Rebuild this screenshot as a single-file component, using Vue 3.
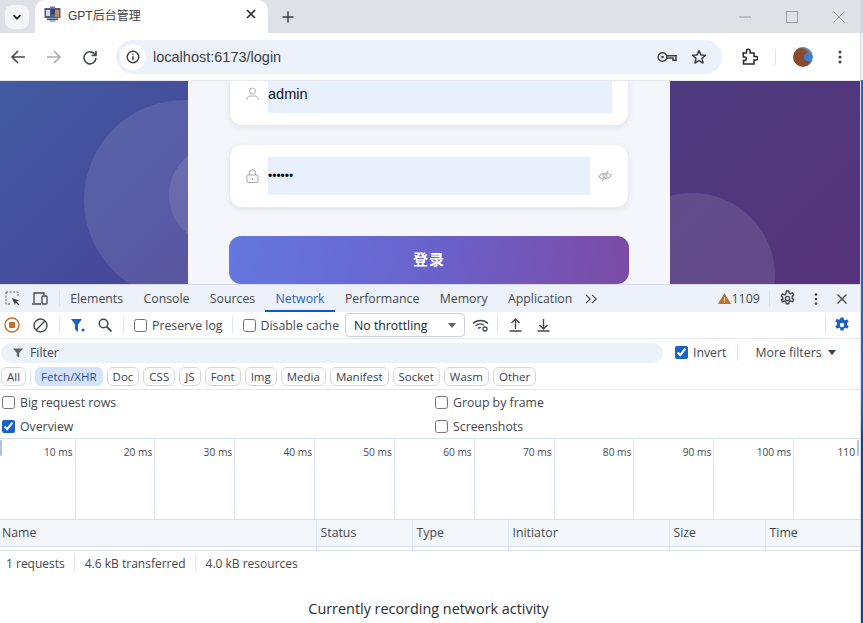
<template>
  <div class="screen">
    <div class="window">
      <div class="tabstrip">
        <button class="tab-search">
          <svg width="12" height="12" viewBox="0 0 12 12"><path d="M2.5 4.2 6 7.7l3.500-3.500" fill="none" stroke="#2a2c30" stroke-width="1.900"/></svg>
        </button>
        <div class="tab">
          <svg class="favicon" width="17" height="16" viewBox="0 0 17 16">
            <rect x="0.500" y="2" width="16" height="10" fill="#4a5f88"/>
            <rect x="2" y="4" width="4" height="6" fill="#d9d8da"/>
            <rect x="7" y="3" width="4" height="5" fill="#2f3f66"/>
            <rect x="11" y="4" width="4" height="7" fill="#c08a62"/>
            <rect x="6" y="0.500" width="5" height="2" fill="#6f78a6"/>
            <path d="M3 12.500h11V14H3z" fill="#2f4a7d"/>
            <path d="M5.500 14.500h6v1h-6z" fill="#5b6fa0"/>
          </svg>
          <span class="tab-title">GPT后台管理</span>
          <svg class="tab-close" width="10" height="10" viewBox="0 0 10 10"><path d="m1 1 8 8M9 1 1 9" stroke="#2a2c30" stroke-width="1.700"/></svg>
        </div>
        <svg class="new-tab" width="12" height="12" viewBox="0 0 12 12"><path d="M6 .5v11M.5 6h11" stroke="#3c4043" stroke-width="1.500"/></svg>
        <div class="win-controls">
          <svg width="12" height="12" viewBox="0 0 12 12"><path d="M0 6h12" stroke="#9a9da1"/></svg>
          <svg width="12" height="12" viewBox="0 0 12 12"><rect x=".5" y=".5" width="11" height="11" fill="none" stroke="#9a9da1"/></svg>
          <svg width="12" height="12" viewBox="0 0 12 12"><path d="m.5.5 11 11M11.500.5l-11 11" stroke="#9a9da1"/></svg>
        </div>
      </div>

      <div class="toolbar">
        <svg class="nav" width="16" height="16" viewBox="0 0 16 16"><path d="M15 8H2M8 2 2 8l6 6" fill="none" stroke="#45484c" stroke-width="1.600"/></svg>
        <svg class="nav" width="16" height="16" viewBox="0 0 16 16"><path d="M1 8h13M8 2l6 6-6 6" fill="none" stroke="#a9acb0" stroke-width="1.600"/></svg>
        <svg class="nav" width="16" height="16" viewBox="0 0 16 16"><path d="M13.300 6A6 6 0 1 0 14 9M14 2v4.500H9.500" fill="none" stroke="#45484c" stroke-width="1.600"/></svg>
        <div class="omnibox">
          <span class="site-info">
            <svg width="14" height="14" viewBox="0 0 14 14"><circle cx="7" cy="7" r="5.800" fill="none" stroke="#3c4043" stroke-width="1.400"/><path d="M7 6.200v4M7 3.700v1.300" stroke="#3c4043" stroke-width="1.500"/></svg>
          </span>
          <span class="url">localhost:6173/login</span>
          <svg class="key" width="20" height="12" viewBox="0 0 20 12"><circle cx="5.500" cy="6" r="4.300" fill="none" stroke="#3c4043" stroke-width="1.500"/><circle cx="5.500" cy="6" r="1.300" fill="#3c4043"/><path d="M10 4.800h9v4.500h-3V7h-6" fill="none" stroke="#3c4043" stroke-width="1.500"/></svg>
          <svg class="star" width="16" height="16" viewBox="0 0 16 16"><path d="m8 1.600 1.900 4.300 4.600.4-3.500 3.100 1 4.600L8 11.600 4 14l1-4.600-3.500-3.100 4.600-.4z" fill="none" stroke="#3c4043" stroke-width="1.500" stroke-linejoin="round"/></svg>
        </div>
        <svg class="ext" width="17" height="17" viewBox="0 0 17 17"><path d="M2 5h3.500V3a1.800 1.800 0 0 1 3.600 0v2H13v3.500h2a1.800 1.800 0 0 1 0 3.600h-2V16H2.500v-3.500h1a1.800 1.800 0 0 0 0-3.600h-1z" fill="none" stroke="#26282b" stroke-width="1.500"/></svg>
        <span class="sep"></span>
        <span class="avatar"></span>
        <svg class="menu" width="4" height="14" viewBox="0 0 4 14"><circle cx="2" cy="2" r="1.500" fill="#3c4043"/><circle cx="2" cy="7" r="1.500" fill="#3c4043"/><circle cx="2" cy="12" r="1.500" fill="#3c4043"/></svg>
      </div>

      <div class="page">
        <span class="blob blob-a"></span>
        <span class="blob blob-b"></span>
        <span class="blob blob-c"></span>
        <div class="login-panel">
          <div class="field">
            <svg class="field-icon" width="13" height="14" viewBox="0 0 13 14"><circle cx="6.500" cy="4" r="3" fill="none" stroke="#aeb1b6"/><path d="M1 13v-1c0-2 1.500-3 3-3h5c1.500 0 3 1 3 3v1" fill="none" stroke="#aeb1b6"/></svg>
            <input class="field-input user" value="admin" />
          </div>
          <div class="field">
            <svg class="field-icon" width="13" height="14" viewBox="0 0 13 14"><rect x="1" y="6" width="11" height="7.500" rx="1" fill="none" stroke="#a4a7ac"/><path d="M3.500 6V3.800a3 3 0 0 1 6 0V6M6.500 9v2" fill="none" stroke="#a4a7ac"/></svg>
            <input class="field-input pass" type="password" value="123456" />
            <svg class="eye" width="14" height="12" viewBox="0 0 14 12"><path d="M.8 6C3 2.500 11 2.500 13.200 6 11 9.500 3 9.500.8 6z" fill="none" stroke="#b5b7ba" stroke-width="1.200"/><circle cx="7" cy="6" r="2" fill="none" stroke="#b5b7ba"/><path d="m3 11 8-10" stroke="#b5b7ba"/></svg>
          </div>
          <button class="login-btn">登录</button>
        </div>
      </div>

      <div class="devtools">
        <div class="dt-tabs">
          <svg class="dt-ic" width="16" height="16" viewBox="0 0 16 16"><path d="M1 1h12v4M1 1v12h4" fill="none" stroke="#5f6368" stroke-dasharray="2 1.500"/><path d="m7 7 7 2.500-3 1.200-1 3.300z" fill="#3c4043"/><path d="m10 10 4 4" stroke="#3c4043" stroke-width="1.300"/></svg>
          <svg class="dt-ic" width="17" height="15" viewBox="0 0 17 15"><path d="M1 13h9M3 12V2h10v2" fill="none" stroke="#45484c" stroke-width="1.300"/><rect x="11" y="5" width="5" height="8" rx="1" fill="none" stroke="#45484c" stroke-width="1.300"/></svg>
          <span class="dt-sep"></span>
          <span v-for="t in panels" :key="t" class="panel-tab" :class="{ active: t === 'Network' }">{{ t }}</span>
          <svg class="more-tabs" width="13" height="10" viewBox="0 0 13 10"><path d="m1 .8 4.200 4.200L1 9.200M7 .8 11.200 5 7 9.200" fill="none" stroke="#45484c" stroke-width="1.200"/></svg>
          <span class="spacer"></span>
          <svg width="13" height="11" viewBox="0 0 13 11"><path d="M6.500 0 13 11H0z" fill="#c5702a"/><path d="M6.500 4v3.500M6.500 8.500v1" stroke="#fff"/></svg>
          <span class="warn-count">1109</span>
          <span class="dt-sep wide"></span>
          <svg class="gear" width="17" height="17" viewBox="0 0 16 16"><path d="M6.800 1h2.400l.4 2 1.300.6 1.800-1 1.200 2-1.500 1.400v1.900l1.500 1.300-1.200 2.100-1.800-1-1.300.7-.4 2H6.800l-.4-2-1.300-.7-1.800 1-1.200-2.100L3.600 8.900V7L2.100 5.600l1.200-2 1.800 1 1.300-.6z" fill="none" stroke="#45484c" stroke-width="1.300" stroke-linejoin="round"/><circle cx="8" cy="8" r="2" fill="none" stroke="#45484c" stroke-width="1.300"/></svg>
          <svg class="kebab" width="4" height="12" viewBox="0 0 4 12"><circle cx="2" cy="1.500" r="1.300" fill="#45484c"/><circle cx="2" cy="6" r="1.300" fill="#45484c"/><circle cx="2" cy="10.500" r="1.300" fill="#45484c"/></svg>
          <svg class="dt-close" width="10" height="10" viewBox="0 0 10 10"><path d="m.5.5 9 9M9.500.5l-9 9" stroke="#45484c" stroke-width="1.400"/></svg>
        </div>

        <div class="net-toolbar">
          <svg width="16" height="16" viewBox="0 0 16 16"><circle cx="8" cy="8" r="7" fill="none" stroke="#c5702a" stroke-width="1.400"/><rect x="5" y="5" width="6" height="6" rx="1" fill="#c5702a"/></svg>
          <svg class="clear" width="15" height="15" viewBox="0 0 15 15"><circle cx="7.500" cy="7.500" r="6.500" fill="none" stroke="#45484c" stroke-width="1.400"/><path d="m3 12 9-9" stroke="#45484c" stroke-width="1.400"/></svg>
          <span class="dt-sep"></span>
          <svg class="funnel" width="14" height="13" viewBox="0 0 14 13"><path d="M0 0h11L7 5.500V13L4 10.500v-5z" fill="#1a62c8"/><circle cx="12" cy="11" r="1.600" fill="#1a62c8"/></svg>
          <svg class="search" width="14" height="14" viewBox="0 0 14 14"><circle cx="5.500" cy="5.500" r="4.300" fill="none" stroke="#45484c" stroke-width="1.500"/><path d="m8.500 8.500 5 5" stroke="#45484c" stroke-width="1.800"/></svg>
          <span class="dt-sep after-search"></span>
          <label class="check"><input type="checkbox" />Preserve log</label>
          <span class="dt-sep"></span>
          <label class="check"><input type="checkbox" />Disable cache</label>
          <div class="throttle"><span>No throttling</span><svg width="8" height="5" viewBox="0 0 8 5"><path d="M0 0h8L4 5z" fill="#5f6368"/></svg></div>
          <svg class="wifi" width="17" height="13" viewBox="0 0 17 13"><path d="M1 4.500C5 .5 12 .5 16 4.500M3.500 7c2.500-2.300 6-2.500 8.500-.8M6 9.500c.8-.8 1.800-1.100 2.800-1" fill="none" stroke="#45484c" stroke-width="1.300"/><circle cx="13" cy="10" r="2" fill="none" stroke="#45484c" stroke-width="1.300"/></svg>
          <span class="dt-sep after-wifi"></span>
          <svg class="updown" width="13" height="14" viewBox="0 0 13 14"><path d="M6.500 11V1.500M2.500 5l4-4 4 4M.5 13h12" fill="none" stroke="#45484c" stroke-width="1.400"/></svg>
          <svg class="updown" width="13" height="14" viewBox="0 0 13 14"><path d="M6.500 1v9.500M2.500 7l4 4 4-4M.5 13h12" fill="none" stroke="#45484c" stroke-width="1.400"/></svg>
          <span class="spacer"></span>
          <span class="dt-sep before-gear"></span>
          <svg width="16" height="16" viewBox="0 0 16 16"><path fill-rule="evenodd" d="M6.500.5h3l.4 2 1.400.7 1.900-.9 1.500 2.500-1.600 1.300v1.800l1.600 1.300-1.500 2.500-1.900-.9-1.400.8-.4 2h-3l-.4-2-1.400-.8-1.900.9-1.500-2.500 1.600-1.300V5.600L1.300 4.300l1.500-2.500 1.900.9 1.400-.7zM8 5.800a2.200 2.200 0 1 0 0 4.400 2.200 2.200 0 0 0 0-4.400z" fill="#1a62c8"/></svg>
        </div>

        <div class="filter-row">
          <div class="filter-box">
            <svg width="10" height="10" viewBox="0 0 10 10"><path d="M0 .5h10L6.200 5v4.500L3.800 8V5z" fill="#5f6368"/></svg>
            <span>Filter</span>
          </div>
          <label class="check invert"><input type="checkbox" checked />Invert</label>
          <span class="dt-sep"></span>
          <span class="more-filters">More filters<svg width="8" height="5" viewBox="0 0 8 5"><path d="M0 0h8L4 5z" fill="#3c4043"/></svg></span>
        </div>

        <div class="chips">
          <template v-for="c in chips" :key="c">
            <span class="chip" :class="{ on: c === 'Fetch/XHR' }">{{ c }}</span>
            <span v-if="c === 'All'" class="chip-sep"></span>
          </template>
        </div>

        <div class="options">
          <label class="check"><input type="checkbox" />Big request rows</label>
          <label class="check"><input type="checkbox" />Group by frame</label>
          <label class="check"><input type="checkbox" checked />Overview</label>
          <label class="check"><input type="checkbox" />Screenshots</label>
        </div>

        <div class="overview">
          <div v-for="ms in ticks" :key="ms" class="tick">{{ ms }}</div>
          <span class="handle left"></span>
          <span class="handle right"></span>
        </div>

        <div class="net-head">
          <span v-for="c in columns" :key="c">{{ c }}</span>
        </div>
        <div class="net-gap">
          <span v-for="c in columns" :key="c"></span>
        </div>

        <div class="status-bar">
          <span>1 requests</span>
          <span>4.6 kB transferred</span>
          <span>4.0 kB resources</span>
        </div>

        <div class="recording">Currently recording network activity</div>
      </div>
    </div>
    <div class="desktop-edge"></div>
  </div>
</template>

<script setup>
const panels = ['Elements', 'Console', 'Sources', 'Network', 'Performance', 'Memory', 'Application']
const chips = ['All', 'Fetch/XHR', 'Doc', 'CSS', 'JS', 'Font', 'Img', 'Media', 'Manifest', 'Socket', 'Wasm', 'Other']
const ticks = ['10 ms', '20 ms', '30 ms', '40 ms', '50 ms', '60 ms', '70 ms', '80 ms', '90 ms', '100 ms', '110']
const columns = ['Name', 'Status', 'Type', 'Initiator', 'Size', 'Time']
</script>

<style>
html, body {
  margin: 0;
  overflow: hidden;
  background: #fff;
}
</style>

<style scoped>
.screen {
  display: flex;
  width: 863px;
  height: 623px;
  overflow: hidden;
  font-family: "Open Sans", "Noto Sans CJK SC", sans-serif;
  color: #45484c;
}
.window {
  width: 860px;
  display: flex;
  flex-direction: column;
}
.desktop-edge {
  flex: 1;
  border-left: 1px solid #d8dae0;
  background: linear-gradient(#d4d6da 0, #d4d6da 33px, #f2f3f5 33px, #f2f3f5 80px, #2a62c0 80px, #2a62c0 400px, #1d3f85 440px, #1d3f85 100%);
}

/* browser chrome */
.tabstrip {
  height: 33px;
  background: #dee1e6;
  display: flex;
  align-items: center;
}
.tab-search {
  width: 24px;
  height: 24px;
  margin-left: 5px;
  border: none;
  border-radius: 8px;
  background: #f4f5f7;
  display: flex;
  align-items: center;
  justify-content: center;
  padding: 0;
}
.tab {
  width: 233px;
  height: 33px;
  margin-left: 6px;
  background: #fff;
  border-radius: 10px 10px 0 0;
  display: flex;
  align-items: center;
  box-sizing: border-box;
  padding: 0 12px 5px 9px;
}
.favicon {
  flex: none;
}
.tab-title {
  margin-left: 7px;
  font-family: "Liberation Sans", "Noto Sans CJK SC", sans-serif;
  font-size: 12px;
  color: #3c4043;
  flex: 1;
}
.new-tab {
  margin-left: 14px;
}
.win-controls {
  margin-left: auto;
  display: flex;
  align-items: center;
  gap: 35px;
  padding-right: 15px;
}
.toolbar {
  height: 48px;
  background: #fff;
  display: flex;
  align-items: center;
  box-sizing: border-box;
  padding-left: 10px;
  border-bottom: 1px solid #e6e8ec;
}
.nav {
  margin-right: 20px;
}
.nav:nth-child(3) {
  margin-right: 18px;
}
.omnibox {
  width: 606px;
  height: 34px;
  background: #edf2fa;
  border-radius: 17px;
  display: flex;
  align-items: center;
  box-sizing: border-box;
  padding-left: 4px;
  padding-right: 15px;
}
.site-info {
  width: 26px;
  height: 26px;
  border-radius: 50%;
  background: #fff;
  display: flex;
  align-items: center;
  justify-content: center;
}
.url {
  margin-left: 7px;
  font-family: "Liberation Sans", sans-serif;
  font-size: 14.5px;
  color: #3c4043;
  flex: 1;
}
.star {
  margin-left: 14px;
}
.ext {
  margin-left: 19px;
}
.sep {
  width: 1px;
  height: 16px;
  background: #dfe1e5;
  margin-left: 17px;
}
.avatar {
  width: 20px;
  height: 20px;
  border-radius: 50%;
  margin-left: 17px;
  background: radial-gradient(circle at 75% 50%, #3c7fd0 0 22%, transparent 24%), radial-gradient(circle at 30% 60%, #8a4a2e 0 55%, #5d8fc4 70%);
}
.menu {
  margin-left: 25px;
}

/* login page, scrolled down a little */
.page {
  position: relative;
  height: 203px;
  overflow: hidden;
  background: linear-gradient(135deg, #425ba0 0%, #47479a 30%, #4d3c7f 62%, #56327a 100%);
}
.blob {
  position: absolute;
  border-radius: 50%;
  background: rgba(255, 255, 255, 0.1);
}
.blob-a {
  width: 200px;
  height: 200px;
  left: 84px;
  top: 19px;
}
.blob-b {
  width: 100px;
  height: 100px;
  left: 169px;
  top: 64px;
}
.blob-c {
  width: 166px;
  height: 166px;
  left: 609px;
  top: 112px;
}
.login-panel {
  position: relative;
  width: 482px;
  height: 203px;
  margin-left: 188px;
  background: #f5f6fb;
  box-sizing: border-box;
  padding: 0 41px;
  display: flex;
  flex-direction: column;
}
.field {
  flex: none;
  height: 62px;
  width: 398px;
  margin-left: 1px;
  box-sizing: border-box;
  background: #fff;
  border-radius: 12px;
  box-shadow: 0 2px 6px rgba(30, 40, 90, 0.1);
  display: flex;
  align-items: center;
  padding: 0 16px;
  margin-bottom: 20px;
}
.field:first-child {
  margin-top: -18px;
}
.field-icon {
  flex: none;
  margin-right: 9px;
}
.field-input {
  border: none;
  outline: none;
  background: #e8f0fe;
  height: 38px;
  padding: 0;
  font-family: "Liberation Sans", sans-serif;
  font-size: 14.5px;
  color: #111;
}
.field-input.user {
  width: 344px;
}
.field-input.pass {
  width: 322px;
  font-size: 12px;
}
.eye {
  margin-left: 8px;
  transform: rotate(-8deg);
}
.login-btn {
  flex: none;
  display: block;
  width: 400px;
  height: 48px;
  margin-top: 9px;
  padding: 0 0 3px;
  border: none;
  border-radius: 12px;
  background: linear-gradient(100deg, #6478df 0%, #6a62cc 50%, #7c4aa4 100%);
  color: #fff;
  font-family: "Noto Sans CJK SC", sans-serif;
  font-size: 15px;
  font-weight: 700;
  letter-spacing: 1px;
}

/* devtools */
.devtools {
  flex: 1;
  background: #fff;
  display: flex;
  flex-direction: column;
  font-size: 12.3px;
  border-top: 1px solid #d6d9f0;
}
.dt-tabs {
  height: 27px;
  background: #edf2fa;
  display: flex;
  align-items: center;
  flex: none;
  box-sizing: border-box;
  padding-left: 5px;
}
.dt-ic + .dt-ic {
  margin-left: 10px;
}
.dt-sep {
  width: 1px;
  height: 16px;
  background: #dfe3ea;
  flex: none;
}
.dt-tabs > .dt-sep {
  margin: 0 0 0 11px;
}
.panel-tab {
  height: 27px;
  line-height: 27px;
  padding: 0 10.2px;
  box-sizing: border-box;
  white-space: nowrap;
  color: #45484c;
}
.panel-tab.active {
  color: #1a62c8;
  border-bottom: 2px solid #0b57d0;
}
.more-tabs {
  margin-left: 3px;
}
.spacer {
  flex: 1;
}
.warn-count {
  font-size: 12.5px;
}
.dt-tabs > .dt-sep.wide {
  margin: 0 9px;
}
.kebab {
  margin-left: 18px;
}
.dt-close {
  margin: 0 13px 0 19px;
}
.net-toolbar {
  height: 27px;
  flex: none;
  display: flex;
  align-items: center;
  padding: 0 10px 0 4px;
  border-bottom: 1px solid #e4e8ee;
  box-sizing: border-box;
}
.clear {
  margin-left: 13px;
}
.net-toolbar > .dt-sep {
  margin: 0 11px;
}
.net-toolbar > .dt-sep.after-search {
  margin: 0 10px 0 11px;
}
.net-toolbar > .check + .dt-sep {
  margin: 0 10px 0 9px;
}
.net-toolbar > .dt-sep.after-wifi {
  margin: 0 11px 0 8px;
}
.net-toolbar > .dt-sep.before-gear {
  margin: 0 8px 0 0;
}
.search {
  margin-left: 13px;
}
.check {
  display: inline-flex;
  align-items: center;
  white-space: nowrap;
  color: #45484c;
}
.check input {
  width: 13px;
  height: 13px;
  margin: 0 5px 0 0;
  accent-color: #1a62c8;
}
.throttle {
  width: 120px;
  height: 24px;
  margin-left: 6px;
  box-sizing: border-box;
  border: 1px solid #cfd3d8;
  border-radius: 4px;
  display: flex;
  align-items: center;
  justify-content: space-between;
  padding: 0 8px;
  color: #222;
}
.wifi {
  margin-left: 7px;
}
.updown {
  margin-right: 15px;
}
.filter-row {
  height: 27px;
  flex: none;
  display: flex;
  align-items: center;
  padding-left: 1px;
}
.filter-box {
  width: 662px;
  height: 20px;
  background: #edf2fa;
  border-radius: 10px;
  display: flex;
  align-items: center;
  gap: 7px;
  padding-left: 12px;
  box-sizing: border-box;
}
.invert {
  margin-left: 12px;
}
.filter-row > .dt-sep {
  margin: 0 17px 0 11px;
}
.more-filters {
  display: inline-flex;
  align-items: center;
  gap: 6px;
}
.chips {
  height: 24px;
  flex: none;
  display: flex;
  align-items: center;
  gap: 4px;
  padding: 0 0 2px 1px;
  border-bottom: 1px solid #e4e8ee;
  box-sizing: border-box;
  font-size: 11.5px;
}
.chip {
  height: 19px;
  line-height: 17px;
  padding: 0 5px;
  box-sizing: border-box;
  border: 1px solid #d5d8dc;
  border-radius: 6px;
  white-space: nowrap;
  color: #3c4043;
}
.chip.on {
  background: #d3e3fd;
  border-color: #d3e3fd;
  color: #1f4f9c;
}
.chip-sep {
  width: 1px;
  height: 16px;
  background: #dfe3ea;
}
.options {
  height: 48px;
  flex: none;
  display: grid;
  grid-template-columns: 433px 1fr;
  grid-auto-rows: 24px;
  padding-left: 2px;
  align-items: center;
  box-sizing: border-box;
}
.overview {
  position: relative;
  height: 81px;
  flex: none;
  display: grid;
  grid-template-columns: 75.5px repeat(9, 79.85px) 1fr;
  border-top: 1px solid #d6e0ee;
  box-sizing: border-box;
  overflow: hidden;
}
.tick {
  border-right: 1px solid #dbe4f1;
  text-align: right;
  padding: 6px 2px 0 0;
  font-size: 10.2px;
  color: #45484c;
  box-sizing: border-box;
}
.tick:nth-child(11) {
  border-right: none;
  padding-right: 5px;
}
.handle {
  position: absolute;
  top: 1px;
  width: 2px;
  height: 16px;
  background: #a9c4ea;
  border-radius: 1px;
}
.handle.left {
  left: 0;
}
.handle.right {
  right: 1px;
}
.net-head,
.net-gap {
  flex: none;
  display: grid;
  grid-template-columns: 317px 96px 96px 161px 96px 94px;
  box-sizing: border-box;
}
.net-head {
  height: 28px;
  background: #f3f6fb;
  border-top: 1px solid #d6e0ee;
  border-bottom: 1px solid #d6e0ee;
}
.net-gap {
  height: 4px;
  border-bottom: 1px solid #d6e0ee;
}
.net-head span,
.net-gap span {
  border-right: 1px solid #dbe4f1;
  padding-left: 3.5px;
  line-height: 26px;
}
.net-head span:first-child {
  padding-left: 2px;
}
.net-head span:last-child,
.net-gap span:last-child {
  border-right: none;
}
.status-bar {
  height: 25px;
  flex: none;
  display: flex;
  align-items: center;
  padding-left: 6px;
  font-size: 12px;
}
.status-bar span + span {
  margin-left: 9px;
  padding-left: 10px;
  border-left: 1px solid #e4e8ee;
}
.recording {
  margin: 23px 0 0 -3px;
  text-align: center;
  font-size: 14.4px;
  color: #2a2c30;
}
</style>
